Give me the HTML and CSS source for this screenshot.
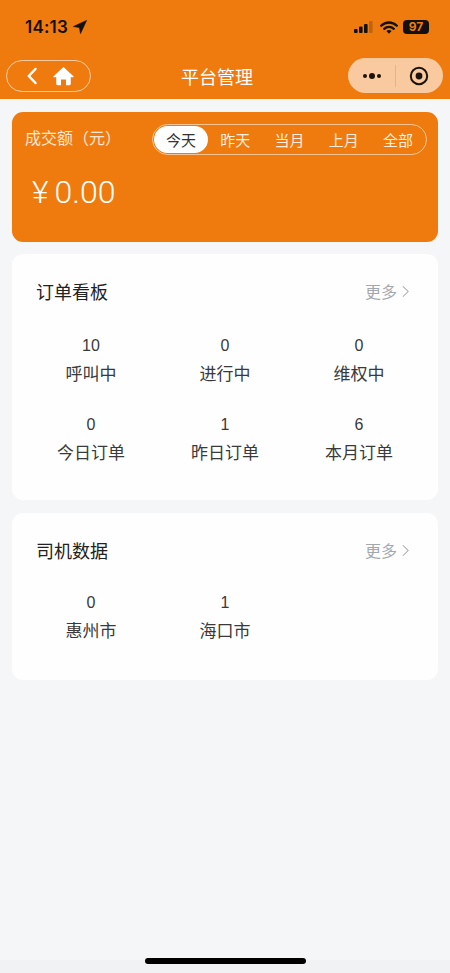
FILE: index.html
```html
<!DOCTYPE html>
<html lang="zh">
<head>
<meta charset="utf-8">
<title>平台管理</title>
<link rel="stylesheet" href="styles.css">
</head>
<body>
<div class="page">
  <header class="header">
    <div class="status">
      <div class="status-left">
        <span class="time">14:13</span>
        <svg class="loc" viewBox="0 0 14 14"><path d="M13.6.4 L.4 6.5 L6.4 7.6 L7.5 13.6 Z" fill="#111" stroke="#111" stroke-width=".6" stroke-linejoin="round"/></svg>
      </div>
      <div class="status-right">
        <svg class="signal" viewBox="0 0 20 12"><rect x="0" y="8" width="3.6" height="4" rx="1" fill="#111"/><rect x="5" y="5.6" width="3.6" height="6.4" rx="1" fill="#111"/><rect x="10" y="3" width="3.6" height="9" rx="1" fill="#111"/><rect x="15" y="0" width="3.6" height="12" rx="1" fill="#111" opacity=".22"/></svg>
        <svg class="wifi" viewBox="0 0 18 13"><path d="M1.2 4.8 C5.6 .4 12.4 .4 16.8 4.8" fill="none" stroke="#111" stroke-width="2.3" stroke-linecap="round"/><path d="M4.2 7.8 C6.9 5.2 11.1 5.2 13.8 7.8" fill="none" stroke="#111" stroke-width="2.3" stroke-linecap="round"/><path d="M6.4 10 C8 8.6 10 8.6 11.6 10 L9 12.8 Z" fill="#111"/></svg>
        <span class="battery">97</span>
      </div>
    </div>
    <div class="nav">
      <div class="nav-pill">
        <svg class="back" viewBox="0 0 12 18"><path d="M9.5 2 L2.8 9 L9.5 16" fill="none" stroke="#fff" stroke-width="2.5" stroke-linecap="round" stroke-linejoin="round"/></svg>
        <svg class="home" viewBox="0 0 22 20"><path d="M11 .6 L21.4 10.2 C21.9 10.7 21.5 11.4 20.9 11.4 L18.6 11.4 L18.6 18 C18.6 19 17.9 19.6 17 19.6 L13.6 19.6 L13.6 13.6 L8.4 13.6 L8.4 19.6 L5 19.6 C4.1 19.6 3.4 19 3.4 18 L3.4 11.4 L1.1 11.4 C.5 11.4 .1 10.7 .6 10.2 Z" fill="#fff"/></svg>
      </div>
      <h1 class="title">平台管理</h1>
      <div class="capsule">
        <span class="dots"><i></i><b></b><i></i></span>
        <span class="divider"></span>
        <svg class="target" viewBox="0 0 20 20"><circle cx="10" cy="10" r="8.2" fill="none" stroke="#1c1208" stroke-width="2"/><circle cx="10" cy="10" r="3.4" fill="#1c1208"/></svg>
      </div>
    </div>
  </header>

  <main class="content">
    <section class="sales">
      <div class="sales-top">
        <span class="sales-label">成交额（元）</span>
        <div class="tabs">
          <span class="tab active">今天</span>
          <span class="tab">昨天</span>
          <span class="tab">当月</span>
          <span class="tab">上月</span>
          <span class="tab">全部</span>
        </div>
      </div>
      <div class="amount"><span class="yen">¥</span>0.00</div>
    </section>

    <section class="card orders">
      <div class="card-head">
        <h2>订单看板</h2>
        <span class="more">更多<svg viewBox="0 0 8 14"><path d="M1 1 L7 7 L1 13" fill="none" stroke="#a3a8ad" stroke-width="1.2"/></svg></span>
      </div>
      <div class="grid">
        <div class="cell"><span class="num">10</span><span class="lbl">呼叫中</span></div>
        <div class="cell"><span class="num">0</span><span class="lbl">进行中</span></div>
        <div class="cell"><span class="num">0</span><span class="lbl">维权中</span></div>
        <div class="cell"><span class="num">0</span><span class="lbl">今日订单</span></div>
        <div class="cell"><span class="num">1</span><span class="lbl">昨日订单</span></div>
        <div class="cell"><span class="num">6</span><span class="lbl">本月订单</span></div>
      </div>
    </section>

    <section class="card drivers">
      <div class="card-head">
        <h2>司机数据</h2>
        <span class="more">更多<svg viewBox="0 0 8 14"><path d="M1 1 L7 7 L1 13" fill="none" stroke="#a3a8ad" stroke-width="1.2"/></svg></span>
      </div>
      <div class="grid">
        <div class="cell"><span class="num">0</span><span class="lbl">惠州市</span></div>
        <div class="cell"><span class="num">1</span><span class="lbl">海口市</span></div>
      </div>
    </section>
  </main>
  <div class="home-strip"><span class="home-bar"></span></div>
</div>
</body>
</html>
```
FILE: styles.css
```css
* { box-sizing: border-box; }
html, body { margin: 0; padding: 0; }
body {
  background: #f5f6f8;
  font-family: "Noto Sans CJK SC", "Liberation Sans", sans-serif;
  color: #333;
}
.page { width: 450px; height: 973px; display: flex; flex-direction: column; overflow: hidden; }

.header { height: 99px; background: #ef7b0f; flex: none; }
.status { height: 53px; display: flex; justify-content: space-between; align-items: flex-start; padding: 18px 21px 0 25px; }
.status-left { display: flex; align-items: center; gap: 5px; height: 18px; }
.time { font-family: Inter, "Liberation Sans", sans-serif; font-size: 17px; font-weight: 600; color: #141008; letter-spacing: .2px; }
.loc { width: 14px; height: 14px; display: block; }
.status-right { display: flex; align-items: center; height: 18px; }
.signal { width: 20px; height: 12px; margin-right: 6px; display: block; }
.wifi { width: 18px; height: 13px; margin-right: 5px; display: block; }
.battery { width: 26px; height: 14px; border-radius: 4px; background: #111; color: #ef7b0f; font: 700 12px/14px Inter, "Liberation Sans", sans-serif; text-align: center; }

.nav { height: 46px; display: flex; align-items: center; justify-content: space-between; padding: 0 7px 0 6px; position: relative; }
.nav-pill { width: 85px; height: 32px; margin-top: -1px; border: 1px solid rgba(255,255,255,.6); border-radius: 16px; display: flex; align-items: center; padding-left: 19px; gap: 15px; }
.back { width: 12px; height: 18px; display: block; }
.home { width: 21px; height: 20px; display: block; }
.title { position: absolute; left: 0; right: 16px; top: 0; margin: 0; text-align: center; font-size: 18px; font-weight: 400; line-height: 46px; color: #fff; }
.capsule { width: 95px; height: 35px; margin-top: -1px; background: rgba(255,255,255,.6); border-radius: 18px; display: flex; align-items: center; position: relative; }
.dots { width: 47px; display: flex; justify-content: center; align-items: center; gap: 2px; padding-left: 1px; }
.dots i { width: 4px; height: 4px; border-radius: 50%; background: #1c1208; }
.dots b { width: 6px; height: 6px; border-radius: 50%; background: #1c1208; }
.divider { width: 1px; height: 22px; background: rgba(0,0,0,.1); }
.target { width: 20px; height: 20px; margin-left: 13px; display: block; }

.content { flex: 1; padding: 13px 12px 0; display: flex; flex-direction: column; }
.sales { height: 130px; background: #ef7b0f; border-radius: 11px; padding: 12px 12px 0 13px; color: #fff; }
.sales-top { display: flex; justify-content: space-between; align-items: center; height: 30px; }
.sales-label { font-size: 16px; line-height: 26px; margin-top: -4px; color: #fbe6d2; }
.tabs { width: 275px; height: 31px; border: 1px solid rgba(255,255,255,.55); border-radius: 16px; display: flex; align-items: center; padding: 0 1px 0 0; margin-right: -1px; }
.tab { flex: 1; height: 27px; line-height: 27px; text-align: center; font-size: 15px; color: #fdeedd; border-radius: 14px; }
.tab.active { background: #fff; color: #333; margin-left: 1px; }
.amount { margin-top: 16px; margin-left: 7px; font-size: 32px; line-height: 44px; font-family: Roboto, "Noto Sans CJK SC", sans-serif; font-weight: 300; color: #fff; }
.yen { margin-right: 6px; }

.card { background: #fefefe; border-radius: 11px; }
.orders { height: 246px; margin-top: 12px; }
.drivers { height: 167px; margin-top: 13px; }
.card-head { display: flex; justify-content: space-between; align-items: center; padding: 23px 29px 0 24px; height: 51px; }
.card-head h2 { margin: 0; font-size: 18px; font-weight: 400; color: #222; line-height: 28px; }
.more { display: flex; align-items: center; gap: 5px; font-size: 16px; color: #a3a8ad; line-height: 28px; }
.more svg { width: 7px; height: 13px; display: block; }
.grid { display: grid; grid-template-columns: repeat(3, 134px); grid-auto-rows: 79px; padding: 28px 12px 0; }
.drivers .grid { padding-top: 26px; }
.cell { display: flex; flex-direction: column; align-items: center; }
.num { font-family: "Liberation Sans", sans-serif; font-size: 16px; line-height: 26px; color: #3a3a3a; }
.lbl { font-size: 17px; line-height: 28px; color: #3a3a3a; }

.home-strip { height: 13px; background: #f1f2f4; position: relative; flex: none; }
.home-bar { position: absolute; left: 145px; top: -2px; width: 161px; height: 6px; border-radius: 3px; background: #000; }
```
